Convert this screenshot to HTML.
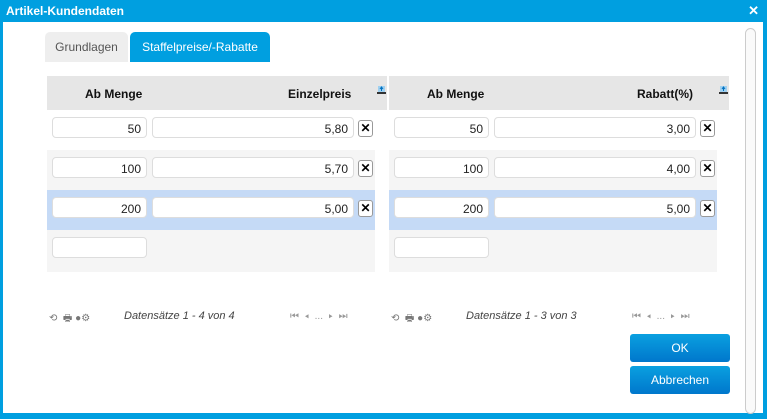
<!DOCTYPE html>
<html><head><meta charset="utf-8"><style>
*{box-sizing:border-box;margin:0;padding:0}
body{width:767px;height:419px;overflow:hidden;font-family:"Liberation Sans",Arial,sans-serif;font-size:12px;background:#fff;position:relative}
.abs{position:absolute}
.title{left:0;top:0;width:767px;height:22px;background:#009fe0;color:#fff;font-weight:bold;font-size:12px;padding:4px 0 0 6px}
.close{right:8px;top:3px;color:#fff;font-weight:bold;font-size:13px}
.lb{left:0;top:22px;width:3px;height:397px;background:#009fe0}
.rb{left:763px;top:22px;width:4px;height:397px;background:#009fe0}
.bb{left:0;top:413px;width:767px;height:6px;background:#009fe0}
.sb{left:745px;top:28px;width:11px;height:386px;border:1px solid #ccc;border-radius:6px;background:#fafafa}
.tab{top:32px;height:30px;padding-top:8px;text-align:center;border-radius:5px 5px 0 0}
.grid{top:110px;width:328px;height:162px;background:#f5f5f5}
.hd{top:76px;width:340px;height:34px;background:#e6e6e6;font-weight:bold;color:#111}
.row{height:40px;position:relative}
.inp{position:absolute;top:7px;height:21px;border:1px solid #ddd;border-radius:4px;background:#fff;text-align:right;padding:4px 5px 0 0;color:#222}
.x{position:absolute;top:10px;width:15px;height:17px;border:1px solid #999;border-radius:3px;background:#fff;font-weight:bold;font-size:12px;text-align:center;line-height:15px}
.ft{top:310px;color:#444;font-style:italic;font-size:11px}
.ic{top:311px;color:#777;font-size:10px}
.btn{left:630px;width:100px;height:28px;background:linear-gradient(#0aa0e0,#0077cc);border-radius:3px;color:#fff;text-align:center;line-height:28px;font-size:12px}
.hi{position:absolute;left:330px;top:10px;width:9px;height:8px}
</style></head><body>
<div class="abs title">Artikel-Kundendaten</div><div class="abs close">✕</div>
<div class="abs lb"></div><div class="abs rb"></div><div class="abs bb"></div>
<div class="abs sb"></div>
<div class="abs tab" style="left:45px;width:83px;background:#eee;color:#555">Grundlagen</div>
<div class="abs tab" style="left:130px;width:140px;background:#009fe0;color:#fff">Staffelpreise/-Rabatte</div>

<div class="abs hd" style="left:47px"><span class="abs" style="left:38px;top:11px">Ab Menge</span><span class="abs" style="left:241px;top:11px">Einzelpreis</span>
<svg class="hi" viewBox="0 0 9 8"><rect x="0" y="6" width="9" height="2" fill="#333"/><rect x="1" y="0" width="7" height="6" fill="#9fd0f0"/><path d="M4.5 1v4M3 3l1.5-2 1.5 2" stroke="#0070c0" fill="none"/></svg></div>
<div class="abs hd" style="left:389px"><span class="abs" style="left:38px;top:11px">Ab Menge</span><span class="abs" style="left:248px;top:11px">Rabatt(%)</span>
<svg class="hi" viewBox="0 0 9 8"><rect x="0" y="6" width="9" height="2" fill="#333"/><rect x="1" y="0" width="7" height="6" fill="#9fd0f0"/><path d="M4.5 1v4M3 3l1.5-2 1.5 2" stroke="#0070c0" fill="none"/></svg></div>

<div class="abs grid" style="left:47px">
 <div class="row" style="background:#fff"><div class="inp" style="left:5px;width:95px">50</div><div class="inp" style="left:105px;width:202px">5,80</div><div class="x" style="left:311px">✕</div></div>
 <div class="row"><div class="inp" style="left:5px;width:95px">100</div><div class="inp" style="left:105px;width:202px">5,70</div><div class="x" style="left:311px">✕</div></div>
 <div class="row" style="background:#c5daf6"><div class="inp" style="left:5px;width:95px">200</div><div class="inp" style="left:105px;width:202px">5,00</div><div class="x" style="left:311px">✕</div></div>
 <div class="row"><div class="inp" style="left:5px;width:95px"></div></div>
</div>
<div class="abs grid" style="left:389px">
 <div class="row" style="background:#fff"><div class="inp" style="left:5px;width:95px">50</div><div class="inp" style="left:105px;width:202px">3,00</div><div class="x" style="left:311px">✕</div></div>
 <div class="row"><div class="inp" style="left:5px;width:95px">100</div><div class="inp" style="left:105px;width:202px">4,00</div><div class="x" style="left:311px">✕</div></div>
 <div class="row" style="background:#c5daf6"><div class="inp" style="left:5px;width:95px">200</div><div class="inp" style="left:105px;width:202px">5,00</div><div class="x" style="left:311px">✕</div></div>
 <div class="row"><div class="inp" style="left:5px;width:95px"></div></div>
</div>

<div class="abs ic" style="left:49px">⟲ &nbsp;🖶 ●⚙</div>
<div class="abs ft" style="left:124px">Datensätze 1 - 4 von 4</div>
<div class="abs ic" style="left:290px;color:#999">⏮ &nbsp;◂ &nbsp;... &nbsp;▸ &nbsp;⏭</div>
<div class="abs ic" style="left:391px">⟲ &nbsp;🖶 ●⚙</div>
<div class="abs ft" style="left:466px">Datensätze 1 - 3 von 3</div>
<div class="abs ic" style="left:632px;color:#999">⏮ &nbsp;◂ &nbsp;... &nbsp;▸ &nbsp;⏭</div>

<div class="abs btn" style="top:334px">OK</div>
<div class="abs btn" style="top:366px">Abbrechen</div>
</body></html>
